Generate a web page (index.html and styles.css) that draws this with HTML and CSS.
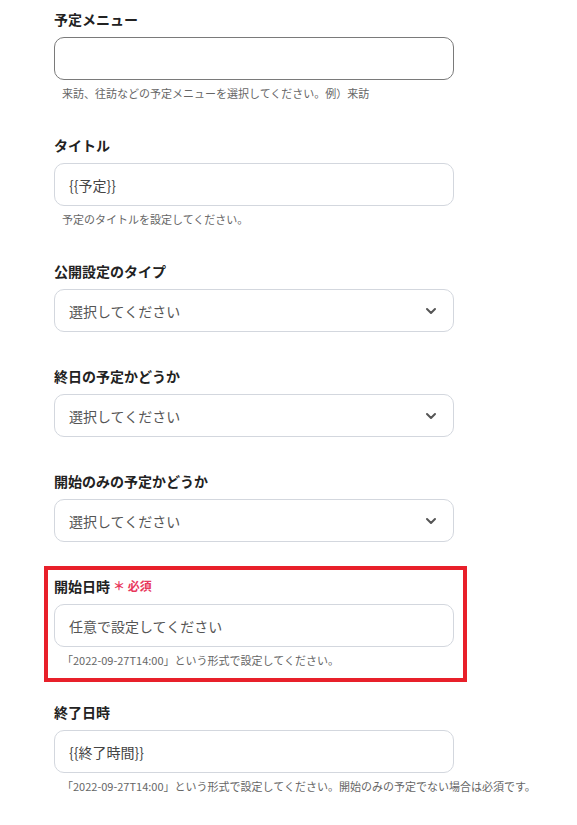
FILE: index.html
```html
<!DOCTYPE html>
<html lang="ja">
<head>
<meta charset="utf-8">
<link rel="stylesheet" href="styles.css">
</head>
<body>
<div class="form">
  <div class="field">
    <div class="label">予定メニュー</div>
    <div class="input input-focus"></div>
    <div class="help">来訪、往訪などの予定メニューを選択してください。例）来訪</div>
  </div>
  <div class="field">
    <div class="label">タイトル</div>
    <div class="input">{{予定}}</div>
    <div class="help">予定のタイトルを設定してください。</div>
  </div>
  <div class="field">
    <div class="label">公開設定のタイプ</div>
    <div class="input select"><span>選択してください</span>
      <svg class="chev" width="12" height="8" viewBox="0 0 12 8"><path d="M2 2 L6 6 L10 2" fill="none" stroke="#555" stroke-width="2" stroke-linecap="round" stroke-linejoin="round"/></svg>
    </div>
  </div>
  <div class="field">
    <div class="label">終日の予定かどうか</div>
    <div class="input select"><span>選択してください</span>
      <svg class="chev" width="12" height="8" viewBox="0 0 12 8"><path d="M2 2 L6 6 L10 2" fill="none" stroke="#555" stroke-width="2" stroke-linecap="round" stroke-linejoin="round"/></svg>
    </div>
  </div>
  <div class="field">
    <div class="label">開始のみの予定かどうか</div>
    <div class="input select"><span>選択してください</span>
      <svg class="chev" width="12" height="8" viewBox="0 0 12 8"><path d="M2 2 L6 6 L10 2" fill="none" stroke="#555" stroke-width="2" stroke-linecap="round" stroke-linejoin="round"/></svg>
    </div>
  </div>
  <div class="field highlight">
    <div class="label">開始日時<span class="req">＊ 必須</span></div>
    <div class="input placeholder">任意で設定してください</div>
    <div class="help">「2022-09-27T14:00」という形式で設定してください。</div>
  </div>
  <div class="field">
    <div class="label">終了日時</div>
    <div class="input">{{終了時間}}</div>
    <div class="help">「2022-09-27T14:00」という形式で設定してください。開始のみの予定でない場合は必須です。</div>
  </div>
</div>
</body>
</html>
```
FILE: styles.css
```css
html, body {
  margin: 0;
  padding: 0;
  background: #ffffff;
}
body {
  font-family: "Noto Sans CJK JP", "Noto Sans", sans-serif;
  color: #222;
}
.form {
  display: flex;
  flex-direction: column;
  gap: 34px;
  padding: 9px 0 0 54px;
  width: 400px;
}
.field {
  display: flex;
  flex-direction: column;
}
.label {
  font-size: 14px;
  font-weight: 700;
  line-height: 20px;
  height: 20px;
  margin-bottom: 8px;
  color: #222;
  display: flex;
  align-items: center;
}
.req {
  color: #e8385c;
  font-size: 12px;
  font-weight: 700;
  margin-left: 3px;
}
.input {
  box-sizing: border-box;
  height: 43px;
  border: 1px solid #d3d7de;
  border-radius: 10px;
  padding: 0 14px;
  display: flex;
  align-items: center;
  font-size: 14px;
  color: #444;
}
.input-focus {
  border-color: #7a7a7a;
}
.placeholder {
  color: #555;
}
.select {
  justify-content: space-between;
  color: #555;
}
.chev {
  margin-right: 2px;
}
.help {
  margin-top: 5px;
  font-size: 11px;
  line-height: 16px;
  color: #666;
  padding-left: 8px;
  white-space: nowrap;
}
.highlight {
  border: 4px solid #e8202a;
  padding: 6px 9px 10px 6px;
  margin: -10px -13px -14px -10px;
}
```
